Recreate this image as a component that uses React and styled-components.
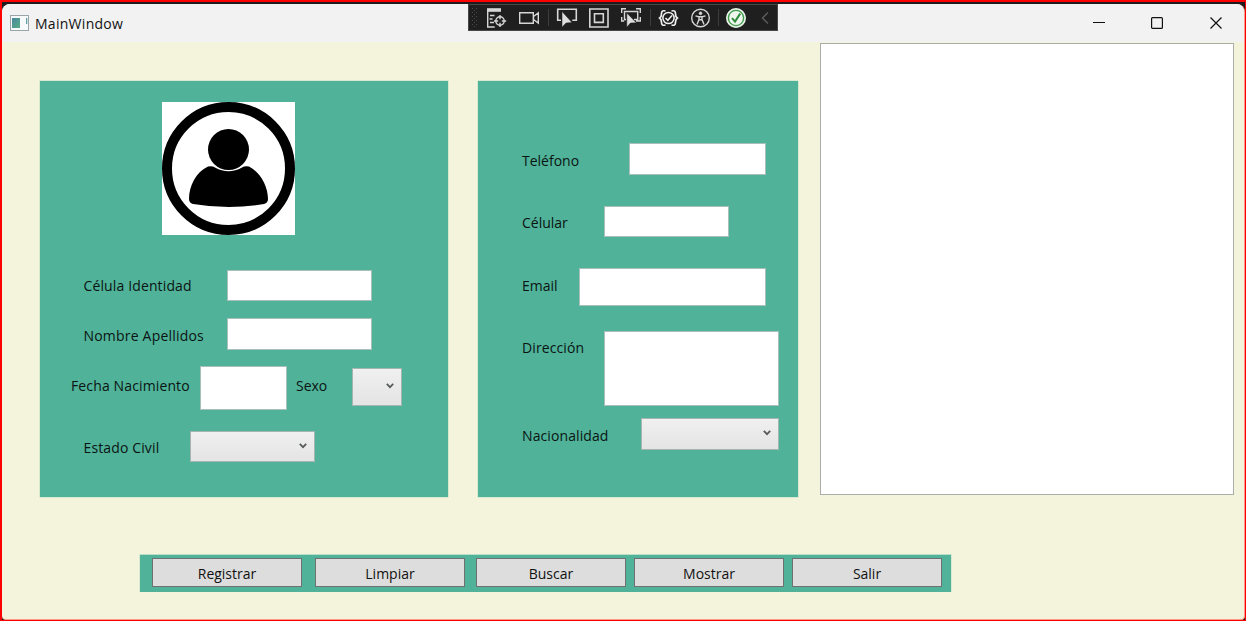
import React from "react";
import styled, { createGlobalStyle } from "styled-components";

const GlobalStyle = createGlobalStyle`
  * { box-sizing: border-box; }
  body { margin: 0; overflow: hidden; }
`;

const Screen = styled.div`
  position: relative;
  width: 1246px;
  height: 621px;
  padding-top: 2px;
  border: solid #fe0000;
  border-width: 2px 1px 1px 2px;
  background: #1d1b1e;
  font-family: "Open Sans", "Noto Sans", sans-serif;
  font-size: 14px;
  line-height: 20px;
  color: #0c1412;
`;

const Window = styled.div`
  display: flex;
  flex-direction: column;
  height: 616px;
  border: solid #fb9a84;
  border-width: 0 1px 1px 0;
  border-radius: 8px 8px 4px 4px;
  background: #f4f4dc;
  overflow: hidden;
`;

const TitleBar = styled.header`
  display: flex;
  align-items: center;
  flex: none;
  height: 38px;
  padding: 0 21px 0 8px;
  background: #f2f2f2;
  color: #111;
`;

const Title = styled.h1`
  flex: 1;
  margin: 1px 0 0 6px;
  font-size: 14px;
  font-weight: 400;
  letter-spacing: 0.28px;
`;

const Caption = styled.div`
  display: flex;
  gap: 45px;
`;

const CaptionGlyph = styled.svg`
  width: 14px;
  height: 14px;
  fill: none;
  stroke: #111;
  stroke-width: 1.2;
`;

const DebugBar = styled.div`
  position: absolute;
  top: 2px;
  left: 466px;
  display: flex;
  width: 310px;
  height: 27px;
  border: 1px solid #48484a;
  background: #1f1f1f;
`;

const Workspace = styled.main`
  display: flex;
  align-items: flex-start;
  height: 453px;
  padding-left: 38px;
`;

const Panel = styled.section`
  flex: none;
  width: ${(p) => p.$w}px;
  height: 416px;
  margin: 39px 0 0 ${(p) => p.$left || 0}px;
  padding-top: ${(p) => p.$top}px;
  background: #4fb299;
  box-shadow: 0 0 0 0.5px #b9e0c4;
`;

const Avatar = styled.svg`
  display: block;
  margin-left: 122px;
  background: #fff;
`;

const Row = styled.div`
  display: flex;
  align-items: flex-start;
  height: ${(p) => p.$h}px;
  margin-top: ${(p) => p.$gap || 0}px;
  padding-left: ${(p) => p.$indent}px;
`;

const Label = styled.label`
  flex: none;
  width: ${(p) => p.$w}px;
  margin-top: ${(p) => p.$drop}px;
  padding-left: ${(p) => p.$inset || 0}px;
  white-space: nowrap;
  letter-spacing: ${(p) => p.$track || 0}px;
`;

const Field = styled.input`
  flex: none;
  width: ${(p) => p.$w}px;
  height: ${(p) => p.$h}px;
  padding: 0 4px;
  border: 1px solid #a9c0ba;
  border-radius: 0;
  background: #fff;
  outline: none;
`;

const Combo = styled.button`
  display: flex;
  justify-content: flex-end;
  align-items: center;
  flex: none;
  width: ${(p) => p.$w}px;
  height: ${(p) => p.$h}px;
  margin: ${(p) => p.$drop || 0}px 0 0;
  padding: 0 6px ${(p) => p.$lift || 0}px 0;
  border: 1px solid #a5b5b0;
  background: linear-gradient(#f0f0f0, #e4e4e4);
`;

const Listing = styled.div`
  flex: none;
  width: 414px;
  height: 452px;
  margin: 1px 0 0 22px;
  border: 1px solid #abadab;
  background: #fff;
`;

const Actions = styled.footer`
  display: flex;
  width: 811px;
  height: 37px;
  margin: 60px 0 0 138px;
  padding: 3px 0 0 12px;
  background: #4fb299;
  box-shadow: 0 -0.5px 0 0.5px #b9e0c4;
`;

const Action = styled.button`
  flex: none;
  width: 150px;
  height: 29px;
  margin-right: ${(p) => p.$gap}px;
  padding: 2px 0 0;
  border: 1px solid #707070;
  background: #ddd;
  font: inherit;
  color: #111;
`;

const Chevron = () => (
  <svg width="10" height="8" viewBox="0 0 10 8" fill="none" stroke="#55595a" strokeWidth="1.7">
    <path d="M1.8 1.8 5 5.2 8.2 1.8" />
  </svg>
);

const AppIcon = () => (
  <svg width="19" height="16" viewBox="0 0 19 16">
    <defs>
      <linearGradient id="tile" x1="0" y1="0" x2="1" y2="1">
        <stop offset="0" stopColor="#4a86a0" />
        <stop offset="1" stopColor="#58ae86" />
      </linearGradient>
    </defs>
    <rect x=".5" y=".5" width="18" height="15" fill="#f7f9fa" stroke="#9aa5aa" />
    <rect x="2" y="3" width="8" height="10" fill="url(#tile)" />
    <rect x="16" y="3" width="1.3" height="6" fill="#5f9fa5" />
  </svg>
);

const DebugIcons = () => (
  <svg width="308" height="25" viewBox="469 5 308 25" fill="none" stroke="#d6d6d6" strokeWidth="1.4">
    <g fill="#4b4b4b" stroke="none">
      {[8, 12, 16, 20, 24].map((y) => (
        <g key={y}>
          <rect x="472" y={y} width="1" height="1" />
          <rect x="476" y={y} width="1" height="1" />
          <rect x="474" y={y + 2} width="1" height="1" />
        </g>
      ))}
    </g>
    <path d="M487 10h14" strokeWidth="3.6" />
    <path d="M487.700 11v16h7M490 15.500h4.500M489.500 19h3M490 22.500h4" />
    <circle cx="500" cy="21" r="4.200" />
    <path d="M500 15v4.200M500 22.800v4.200M494 21h4.200M501.800 21h4.400" />
    <path d="M519.700 12.700h13.600v10.600h-13.600zM533.500 16.500l4.800-3.600v10.200l-4.800-3.600z" />
    <path d="M548.500 9v17M650.500 9v17M718.500 9v17" stroke="#3d3d3d" strokeWidth="1" />
    <path d="M561 20.200h-3.300V9.200h18.600v11h-4" strokeWidth="1.600" />
    <path d="M562 11.500v15.700l4-4.200 6-.4z" fill="#dedede" stroke="#1f1f1f" strokeWidth=".5" />
    <path d="M589.800 9h18.200v18h-18.200zM594.500 13.800h8.800v8.600h-8.800z" strokeWidth="1.600" />
    <path d="M621.700 13V8.800h4.300M636 8.800h4.300V13M640.300 17v4H636M621.700 17v4h2.500M626 19.500h-1.500v-8h13.200v8H634" strokeWidth="1.400" />
    <path d="M626.800 13v14.300l3.600-4.200 6-.3z" fill="#dedede" stroke="#1f1f1f" strokeWidth=".5" />
    <path d="M665.500 11c-3-.8-4 .3-4 2.700 0 2-.5 3.400-1.800 4.300 1.300.9 1.800 2.300 1.800 4.300 0 2.400 1 3.500 4 2.700M671.500 11c3-.8 4 .3 4 2.700 0 2 .5 3.400 1.800 4.300-1.300.9-1.800 2.300-1.800 4.300 0 2.400-1 3.500-4 2.700" stroke="#f0f0f0" strokeWidth="1.700" />
    <circle cx="668.500" cy="18" r="5.600" stroke="#f0f0f0" strokeWidth="1.500" />
    <path d="M665.500 18l2.300 2.300 4.200-4.800" stroke="#f0f0f0" strokeWidth="1.500" />
    <circle cx="700.500" cy="18" r="8.800" />
    <circle cx="700.500" cy="13.300" r="1.500" fill="#d6d6d6" strokeWidth=".5" />
    <path d="M695.500 15.800l3.500 1v2.700l-2 5M705.500 15.800l-3.500 1v2.700l2 5M698.500 16.800h4M699 19.800h3" />
    <circle cx="736" cy="18" r="9.300" fill="#dcefdc" stroke="#e8f3e8" />
    <circle cx="736" cy="18" r="7.600" fill="#eef6ee" stroke="#3f9a4c" />
    <path d="M732 18.200l3 3.400 5.200-8" stroke="#2f8a3b" strokeWidth="2" />
    <path d="M768 12.500l-5.500 5.500 5.500 5.500" stroke="#5d5d5d" />
  </svg>
);

const personal = [
  { label: "Célula Identidad", gap: 35, drop: 6, fieldH: 31, track: 0.13 },
  { label: "Nombre Apellidos", gap: 17, drop: 8, fieldH: 32, track: 0.2 },
];

const contact = [
  { label: "Teléfono", gap: 0, drop: 8, offset: 107, w: 137, h: 32 },
  { label: "Célular", gap: 31, drop: 7, offset: 82, w: 125, h: 31 },
  { label: "Email", gap: 31, drop: 8, offset: 57, w: 187, h: 38 },
  { label: "Dirección", gap: 25, drop: 7, offset: 82, w: 175, h: 75, track: 0.1 },
];

const actions = [
  ["Registrar", 13],
  ["Limpiar", 11],
  ["Buscar", 8],
  ["Mostrar", 8],
  ["Salir", 0],
];

export default function App() {
  return (
    <>
      <GlobalStyle />
      <Screen>
        <Window>
          <TitleBar>
            <AppIcon />
            <Title>MainWindow</Title>
            <Caption>
              <CaptionGlyph><path d="M2 6.500h12" /></CaptionGlyph>
              <CaptionGlyph><rect x="1.600" y="1.600" width="10.800" height="10.800" rx="1" /></CaptionGlyph>
              <CaptionGlyph><path d="M1.500 1.500l11 11M12.500 1.500l-11 11" /></CaptionGlyph>
            </Caption>
          </TitleBar>
          <Workspace>
            <Panel $w={408} $top={21}>
              <Avatar width="133" height="133" viewBox="0 0 133 133">
                <circle cx="66.500" cy="66.500" r="61.500" fill="none" stroke="#000" strokeWidth="10" />
                <path d="M46 64.500C34 70 27 84 27 97q0 4 4 5 36 6 71 0 4-1 4-5C106 84 98 70 87 64.500q-4-1-7 1-13.500 7.500-27 0-3-2-7-1z" />
                <circle cx="66.500" cy="47.500" r="20.500" />
              </Avatar>
              {personal.map((r) => (
                <Row key={r.label} $h={31} $gap={r.gap} $indent={43}>
                  <Label $w={144} $inset={0.5} $drop={r.drop} $track={r.track}>{r.label}</Label>
                  <Field $w={145} $h={r.fieldH} />
                </Row>
              ))}
              <Row $h={44} $gap={17} $indent={30}>
                <Label $w={130} $inset={1} $drop={10} $track={0.13}>Fecha Nacimiento</Label>
                <Field $w={87} $h={44} />
                <Label $w={65} $inset={9} $drop={10}>Sexo</Label>
                <Combo $w={50} $h={38} $drop={2} $lift={3} aria-label="Sexo"><Chevron /></Combo>
              </Row>
              <Row $h={31} $gap={21} $indent={43}>
                <Label $w={107} $inset={0.5} $drop={7} $track={0.13}>Estado Civil</Label>
                <Combo $w={125} $h={31} $lift={2} aria-label="Estado Civil"><Chevron /></Combo>
              </Row>
            </Panel>
            <Panel $w={320} $left={30} $top={62}>
              {contact.map((r) => (
                <Row key={r.label} $h={r.h} $gap={r.gap} $indent={44}>
                  <Label $w={r.offset} $drop={r.drop} $track={r.track}>{r.label}</Label>
                  <Field $w={r.w} $h={r.h} />
                </Row>
              ))}
              <Row $h={32} $gap={12} $indent={44}>
                <Label $w={119} $drop={8} $track={0.1}>Nacionalidad</Label>
                <Combo $w={138} $h={32} $lift={2} aria-label="Nacionalidad"><Chevron /></Combo>
              </Row>
            </Panel>
            <Listing />
          </Workspace>
          <Actions>
            {actions.map(([name, gap]) => (
              <Action key={name} $gap={gap}>{name}</Action>
            ))}
          </Actions>
        </Window>
        <DebugBar><DebugIcons /></DebugBar>
      </Screen>
    </>
  );
}
